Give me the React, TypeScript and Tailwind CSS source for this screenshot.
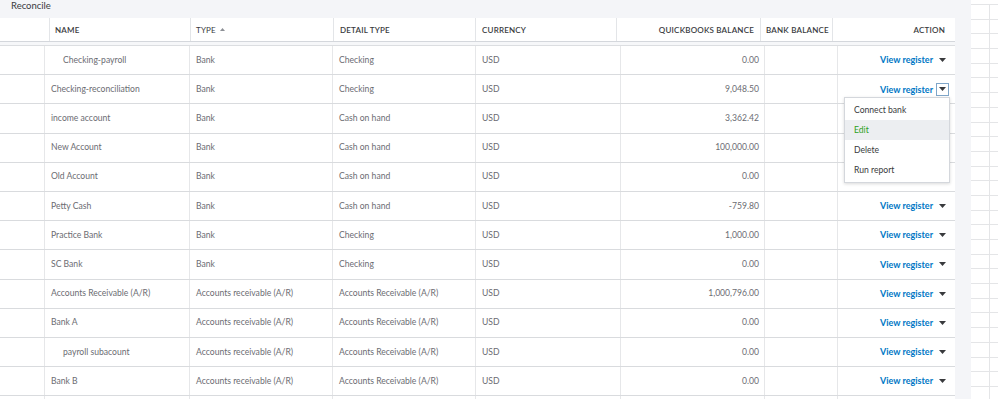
import React from 'react'

type Row = {
  name: string
  indent?: boolean
  type: string
  detail: string
  balance: string
}

const rows: Row[] = [
  { name: 'Checking-payroll', indent: true, type: 'Bank', detail: 'Checking', balance: '0.00' },
  { name: 'Checking-reconciliation', type: 'Bank', detail: 'Checking', balance: '9,048.50' },
  { name: 'income account', type: 'Bank', detail: 'Cash on hand', balance: '3,362.42' },
  { name: 'New Account', type: 'Bank', detail: 'Cash on hand', balance: '100,000.00' },
  { name: 'Old Account', type: 'Bank', detail: 'Cash on hand', balance: '0.00' },
  { name: 'Petty Cash', type: 'Bank', detail: 'Cash on hand', balance: '-759.80' },
  { name: 'Practice Bank', type: 'Bank', detail: 'Checking', balance: '1,000.00' },
  { name: 'SC Bank', type: 'Bank', detail: 'Checking', balance: '0.00' },
  { name: 'Accounts Receivable (A/R)', type: 'Accounts receivable (A/R)', detail: 'Accounts Receivable (A/R)', balance: '1,000,796.00' },
  { name: 'Bank A', type: 'Accounts receivable (A/R)', detail: 'Accounts Receivable (A/R)', balance: '0.00' },
  { name: 'payroll subacount', indent: true, type: 'Accounts receivable (A/R)', detail: 'Accounts Receivable (A/R)', balance: '0.00' },
  { name: 'Bank B', type: 'Accounts receivable (A/R)', detail: 'Accounts Receivable (A/R)', balance: '0.00' },
  { name: '', type: '', detail: '', balance: '' },
]

const headCols = 'grid grid-cols-[50px_141px_143px_142px_141px_144px_72px_122px]'
const bodyCols = 'grid grid-cols-[45px_145px_143px_143px_145px_144px_73px_114px]'

function Caret() {
  return (
    <svg width="7" height="4" viewBox="0 0 7 4">
      <path d="M0 0h7L3.5 4z" fill="#393a3d" />
    </svg>
  )
}

export default function App() {
  return (
    <div className="w-[998px] h-[399px] overflow-hidden bg-white flex font-['Lato',sans-serif]">
      {/* main panel */}
      <div className="w-[971px] shrink-0 bg-[#f4f5f8] flex flex-col">
        <div className="h-[18px] shrink-0 pl-[11px] pb-[5px] text-[9.5px] text-[#393a3d] flex items-center">
          Reconcile
        </div>

        <div className="w-[955px] bg-white flex-1 relative">
          {/* header */}
          <div className={`${headCols} h-[24px] text-[8px] font-semibold text-[#393a3d] tracking-[0.2px] border-b border-[#d4d7dc]`}>
            <div className="border-r border-[#e3e5e8]" />
            <div className="border-r border-[#e3e5e8] flex items-center pl-[5px]">NAME</div>
            <div className="border-r border-[#e3e5e8] flex items-center pl-[5px] gap-[4px] font-normal">
              TYPE
              <svg width="5" height="3" viewBox="0 0 5 3"><path d="M0 3h5L2.5 0z" fill="#8d9096" /></svg>
            </div>
            <div className="border-r border-[#e3e5e8] flex items-center pl-[6px]">DETAIL TYPE</div>
            <div className="border-r border-[#e3e5e8] flex items-center pl-[6px]">CURRENCY</div>
            <div className="border-r border-[#e3e5e8] flex items-center justify-end pr-[6px]">QUICKBOOKS BALANCE</div>
            <div className="border-r border-[#e3e5e8] flex items-center pl-[5px]">BANK BALANCE</div>
            <div className="flex items-center justify-end pr-[10px]">ACTION</div>
          </div>
          <div className="h-[4px] bg-[#f6f7f9] border-b border-[#dcdee1]" />

          {/* body */}
          {rows.map((r, i) => (
            <div
              key={i}
              className={`${bodyCols} h-[29.2px] text-[8.6px] text-[#6b6c72] border-b border-[#d9dbde]`}
            >
              <div className="border-r border-[#e6e7e9]" />
              <div className={`border-r border-[#e6e7e9] flex items-center ${r.indent ? 'pl-[18px]' : 'pl-[6px]'}`}>{r.name}</div>
              <div className="border-r border-[#e6e7e9] flex items-center pl-[6px]">{r.type}</div>
              <div className="border-r border-[#e6e7e9] flex items-center pl-[6px]">{r.detail}</div>
              <div className="border-r border-[#e6e7e9] flex items-center pl-[6px]">{r.name ? 'USD' : ''}</div>
              <div className="border-r border-[#e6e7e9] flex items-center justify-end pr-[5px]">{r.balance}</div>
              <div className="border-r border-[#e6e7e9]" />
              <div className={`flex items-center justify-end pr-[3px] ${i === 2 || i === 3 || i === 4 ? 'invisible' : ''}`}>
                {r.name && (
                  <>
                    <span className="text-[#0077c5] font-bold text-[9px]">View register</span>
                    {i === 1 ? (
                      <span className="ml-[3px] w-[13px] h-[13px] border border-[#7fa6c9] bg-white flex items-center justify-center">
                        <Caret />
                      </span>
                    ) : (
                      <span className="ml-[3px] w-[13px] h-[13px] flex items-center justify-center">
                        <Caret />
                      </span>
                    )}
                  </>
                )}
              </div>
            </div>
          ))}

          {/* open action menu */}
          <div className="absolute left-[844px] top-[79px] w-[106px] bg-white border border-[#d4d7dc] shadow-[0_1px_3px_rgba(0,0,0,0.15)] py-[2px] text-[8.6px] text-[#393a3d]">
            <div className="h-[20px] flex items-center pl-[9px]">Connect bank</div>
            <div className="h-[20px] flex items-center pl-[9px] bg-[#eceef1] text-[#2ca01c]">Edit</div>
            <div className="h-[20px] flex items-center pl-[9px]">Delete</div>
            <div className="h-[20px] flex items-center pl-[9px]">Run report</div>
          </div>
        </div>
      </div>

      {/* side sheet grid */}
      <div className="flex-1 flex flex-col pt-[4px]">
        {Array.from({ length: 27 }).map((_, i) => (
          <div key={i} className="h-[14.7px] shrink-0 border-t border-[#e4e5e7] flex">
            <div className="w-[19px] border-r border-[#e4e5e7]" />
          </div>
        ))}
      </div>
    </div>
  )
}
